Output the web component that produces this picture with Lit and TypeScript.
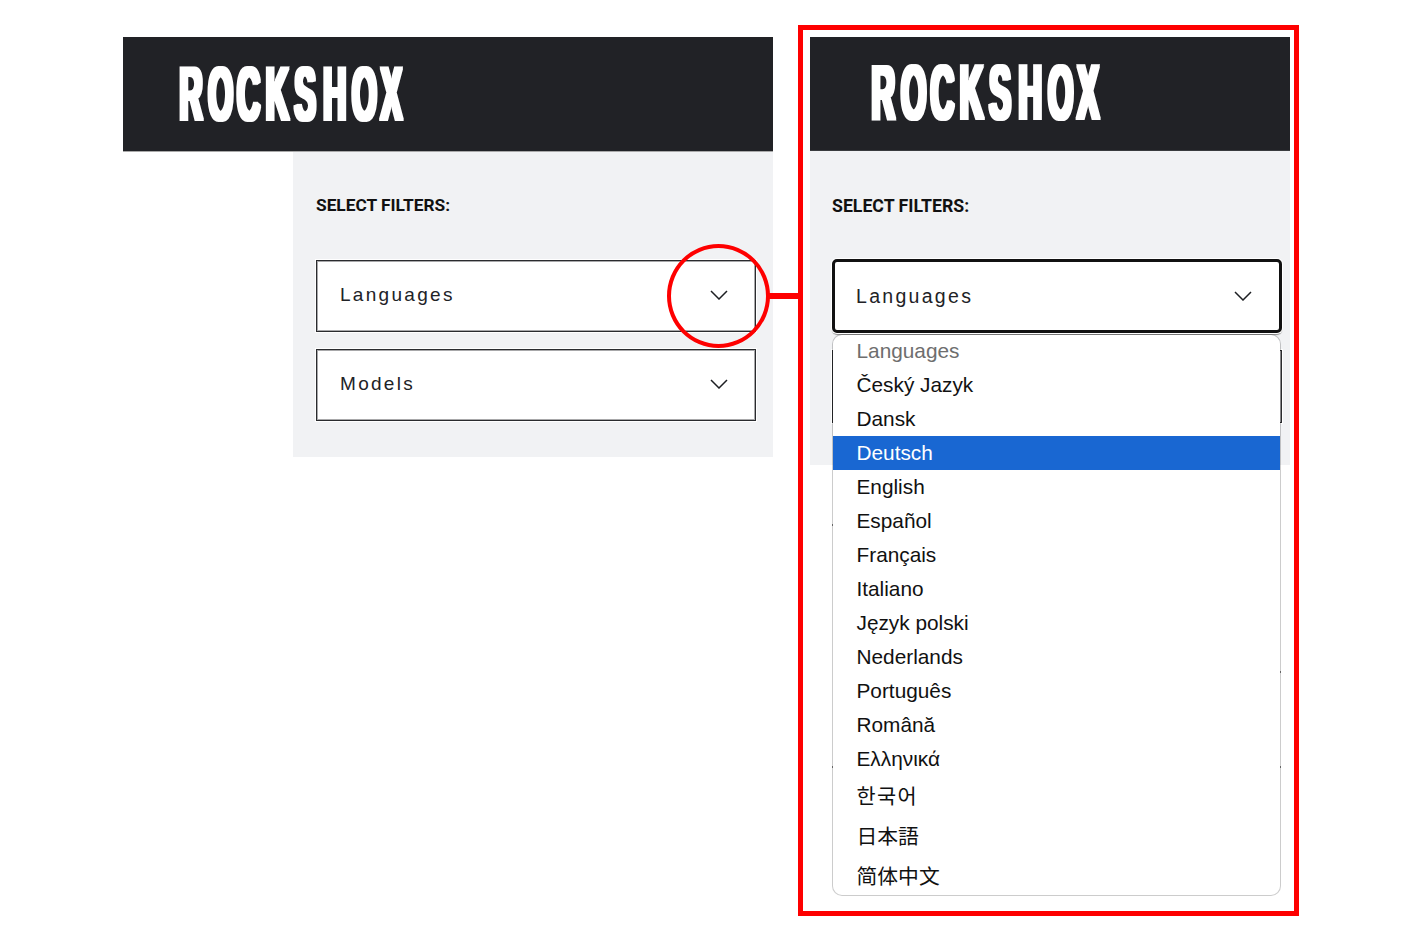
import { LitElement, html, css, svg } from "lit";
import { customElement } from "lit/decorators.js";

const LANGS = [
  "Languages", "Český Jazyk", "Dansk", "Deutsch", "English", "Español", "Français",
  "Italiano", "Język polski", "Nederlands", "Português", "Română", "Ελληνικά",
];
const CJK: [string, string][] = [
  ["한국어", "ko"], ["日本語", "ja"], ["简体中文", "zh"],
];
const TICKS = [
  { x: 22, y: 373 }, { x: 22, y: 615 }, { x: 470, y: 520 }, { x: 470, y: 615 },
];
const LOGO_SCALE = 0.42;
const LOGO_X = Array.from({ length: 8 }, (_, i) => ((1.6 + i * 28.75) / LOGO_SCALE).toFixed(1)).join(" ");

const chevron = svg`<svg class="chev" viewBox="0 0 18 10" fill="none"><path d="M1 1l8 8 8-8" stroke="#1d1f23" stroke-width="1.5"/></svg>`;

@customElement("app-root")
export class AppRoot extends LitElement {
  static styles = css`
    :host { display: block; background: #fff; height: 951px; font-family: "Liberation Sans", Arial, sans-serif; color: #111; overflow: hidden; }
    .stage { position: relative; display: flex; align-items: flex-start; padding: 25px 0 0 123px; }
    .left { width: 650px; margin-top: 12px; }
    .head { background: #212226; display: flex; align-items: center; box-sizing: border-box; }
    .left .head { height: 115px; padding: 0 0 2px 55px; border-bottom: 1px solid #a9a9a9; }
    .logo { display: block; overflow: visible; }
    .logo text { font: 700 76px "Liberation Sans", Arial, sans-serif; fill: #fff; }
    .left .logo { width: 226px; height: 58px; }
    .left .body { margin-left: 170px; width: 480px; box-sizing: border-box; height: 305px; padding: 43px 17px 0 23px; background: #f1f2f4; }
    .label { font: 700 17.3px/20px Roboto, sans-serif; color: #111; height: 20px; }
    .stack { display: flex; flex-direction: column; }
    .left .stack { margin-top: 45px; gap: 17px; }
    .sel { display: flex; align-items: center; justify-content: space-between; box-sizing: border-box; height: 72px; background: #fff; border: 1px solid #2a2b2e; box-shadow: 0 0 0 1px #fff, inset 0 0 0 1px #a8a8aa; font-size: 19px; letter-spacing: 2.3px; color: #212226; padding: 0 27px 2px 23px; }
    .chev { width: 18px; height: 10px; display: block; }
    .right { margin-left: 25px; width: 501px; height: 891px; box-sizing: border-box; border: 5px solid #fe0000; padding: 7px 4px 0 7px; }
    .right .head { height: 114px; padding: 0 0 4px 60px; border-bottom: 1px solid #3a3b3e; }
    .right .logo { width: 231px; height: 59px; }
    .right .body { position: relative; height: 314px; box-sizing: border-box; padding: 45px 8px 0 22px; background: #f1f2f4; }
    .right .label { font-size: 17.7px; }
    .right .stack { margin-top: 43px; gap: 17px; }
    .right .sel { height: 73px; padding: 0 28px 0 23px; letter-spacing: 2.3px; font-size: 19.5px; }
    .right .sel.active { height: 74px; border: 3px solid #111; border-radius: 5px; padding-left: 21px; padding-right: 27px; box-shadow: 0 0 0 1px #fff, 0 2px 1px #8a8a8a; position: relative; }
    .menu { position: absolute; left: 22px; top: 183px; width: 449px; height: 562px; box-sizing: border-box; background: #fff; background-clip: padding-box; border: 1px solid rgba(0,0,0,.2); border-radius: 10px; overflow: hidden; display: flex; flex-direction: column; }
    .item { height: 34px; flex: none; padding-left: 23.5px; font-size: 20.8px; line-height: 34px; color: #111; }
    .item.first { margin-top: -1px; color: #6e6e6e; }
    .item.on { background: #1967d2; color: #fff; }
    .item.cjk { height: 40px; line-height: 42px; }
    .item.cjk:lang(ko) { font-family: "Liberation Sans", "Noto Sans CJK KR", sans-serif; letter-spacing: 1.4px; }
    .item.cjk:lang(ja) { font-family: "Liberation Sans", "Noto Sans CJK JP", sans-serif; }
    .item.cjk:lang(zh) { font-family: "Liberation Sans", "Noto Sans CJK SC", sans-serif; }
    .tick { position: absolute; width: 1px; height: 2px; background: #666; }
    .circle { position: absolute; left: 667px; top: 244px; width: 103px; height: 104px; box-sizing: border-box; border: 4px solid #fe0000; border-radius: 50%; }
    .wire { position: absolute; left: 769px; top: 293px; width: 30px; height: 6px; background: #fe0000; }
  `;

  private logo() {
    return html`<svg class="logo" viewBox="0 0 226 58" preserveAspectRatio="none">
      <defs><filter id="fat" x="-5%" y="-10%" width="110%" height="120%"><feMorphology operator="dilate" radius="1.7 1.4"/></filter></defs>
      <g filter="url(#fat)"><text x=${LOGO_X} y="56" transform="scale(${LOGO_SCALE} 1)">ROCKSHOX</text></g>
    </svg>`;
  }

  render() {
    return html`
      <div class="stage">
        <section class="left">
          <header class="head">${this.logo()}</header>
          <div class="body">
            <div class="label">SELECT FILTERS:</div>
            <div class="stack">
              <div class="sel"><span>Languages</span>${chevron}</div>
              <div class="sel"><span>Models</span>${chevron}</div>
            </div>
          </div>
        </section>
        <section class="right">
          <header class="head">${this.logo()}</header>
          <div class="body">
            <div class="label">SELECT FILTERS:</div>
            <div class="stack">
              <div class="sel active"><span>Languages</span>${chevron}</div>
              <div class="sel"></div>
            </div>
            <div class="menu">
              ${LANGS.map((l, i) => html`<div class="item ${i === 0 ? "first" : ""} ${l === "Deutsch" ? "on" : ""}">${l}</div>`)}
              ${CJK.map(([l, c]) => html`<div class="item cjk" lang=${c}>${l}</div>`)}
            </div>
            ${TICKS.map((t) => html`<i class="tick" style="left:${t.x}px;top:${t.y}px"></i>`)}
          </div>
        </section>
        <div class="circle"></div>
        <div class="wire"></div>
      </div>
    `;
  }
}
